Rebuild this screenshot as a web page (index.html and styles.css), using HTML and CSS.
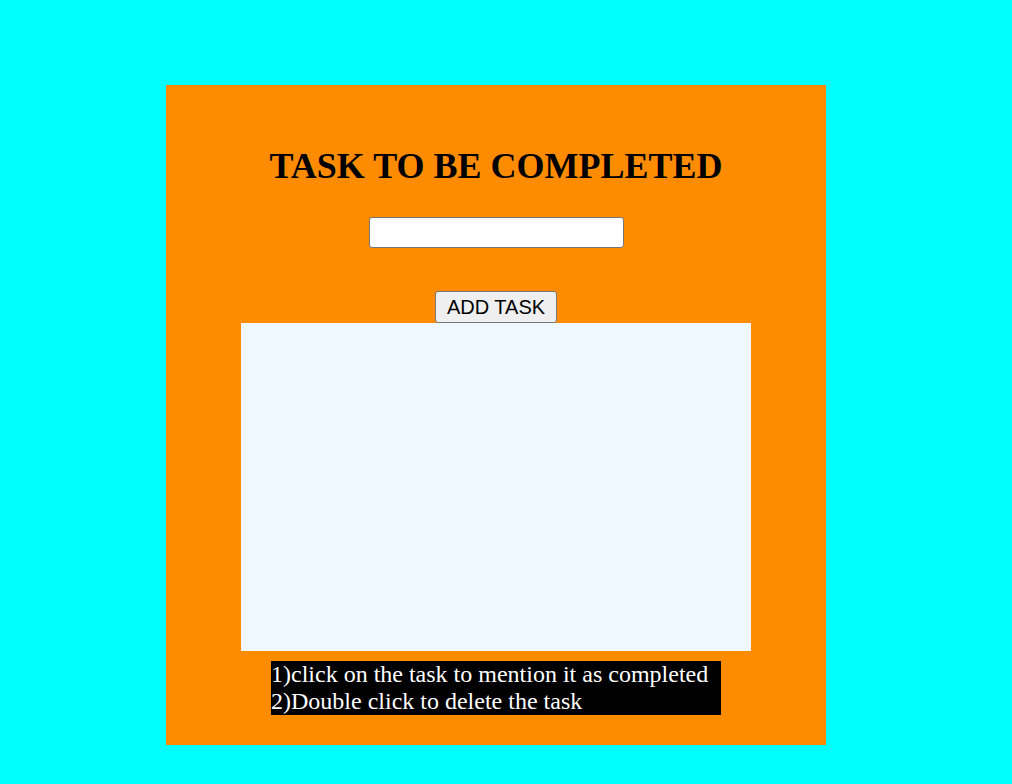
FILE: index.html
```html
<!DOCTYPE html>
<html>
<head>
<meta charset="utf-8">
<link rel="stylesheet" href="styles.css">
</head>
<body>
<div class="card">
  <h1 class="title">TASK TO BE COMPLETED</h1>
  <input class="task-input" type="text">
  <button class="add-btn">ADD TASK</button>
  <ul class="task-list"></ul>
  <div class="note">1)click on the task to mention it as completed<br>2)Double click to delete the task</div>
</div>
</body>
</html>
```

FILE: styles.css
```css
html, body {
  margin: 0;
  padding: 0;
  background: #00ffff;
  font-family: "Liberation Serif", "Times New Roman", serif;
}
.card {
  width: 660px;
  height: 660px;
  margin: 85px 0 0 166px;
  background: #ff8c00;
  display: flex;
  flex-direction: column;
  align-items: center;
  box-sizing: border-box;
  padding-top: 61px;
}
.title {
  margin: 0;
  font-size: 36px;
  line-height: 41px;
  font-weight: bold;
  color: #000;
}
.task-input {
  margin-top: 30px;
  width: 255px;
  height: 31px;
  box-sizing: border-box;
  border: 1px solid #767676;
  border-radius: 3px;
  background: #fff;
  padding: 0 4px;
}
.add-btn {
  margin-top: 43px;
  width: 122px;
  height: 32px;
  box-sizing: border-box;
  font-family: "Liberation Sans", Arial, sans-serif;
  font-size: 20px;
  color: #000;
  background: #efefef;
  border: 1px solid #767676;
  border-radius: 3px;
  padding: 0;
}
.task-list {
  margin: 0;
  padding: 0;
  list-style: none;
  width: 510px;
  height: 328px;
  background: #f0f8ff;
}
.note {
  margin-top: 10px;
  width: 450px;
  height: 54px;
  background: #000;
  color: #fff;
  font-size: 24px;
  line-height: 27px;
}
```
